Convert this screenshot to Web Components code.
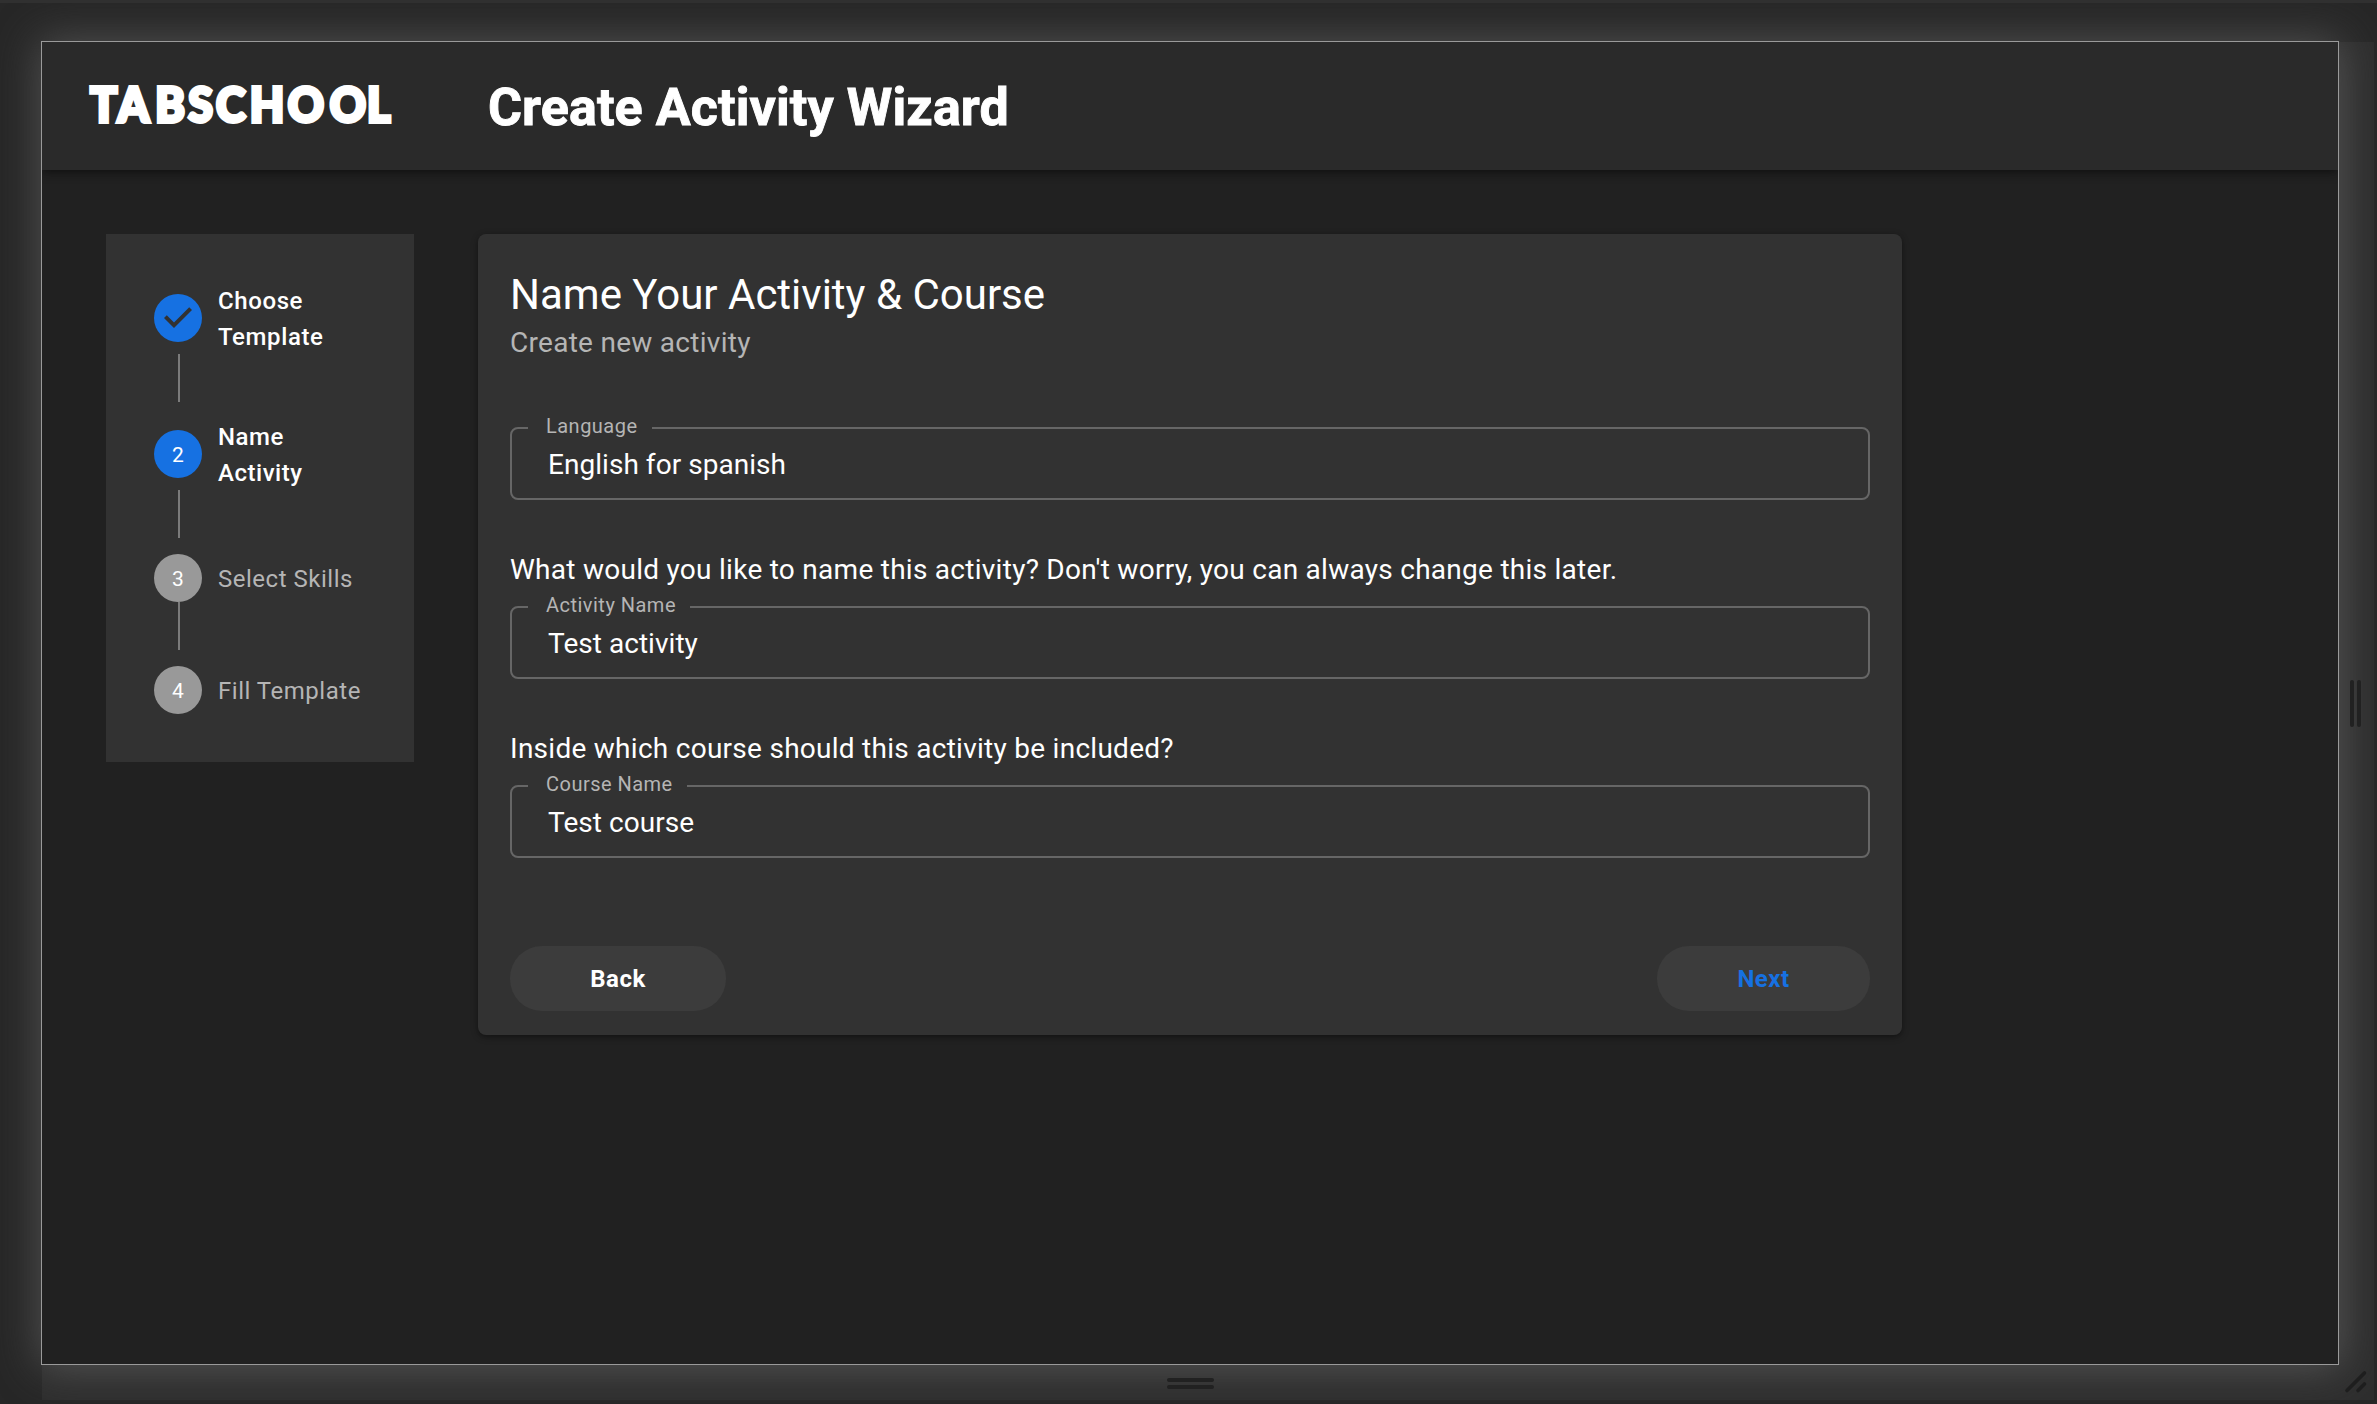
<!DOCTYPE html>
<html lang="en">
<head>
<meta charset="utf-8">
<title>Create Activity Wizard</title>
<style>
html,body{margin:0;height:100%;background:#272727;font-family:Roboto,sans-serif;color:#fff;overflow:hidden}
</style>
</head>
<body>
<device-frame>
  <app-header slot="screen">Create Activity Wizard</app-header>
  <wizard-layout slot="screen">
    <wizard-steps slot="side">
      <wizard-step state="done" n="1">Choose Template</wizard-step>
      <wizard-step state="active" n="2">Name Activity</wizard-step>
      <wizard-step n="3">Select Skills</wizard-step>
      <wizard-step n="4" last>Fill Template</wizard-step>
    </wizard-steps>
    <wizard-card>
      <span slot="title">Name Your Activity &amp; Course</span>
      <span slot="subtitle">Create new activity</span>
      <outlined-field label="Language" notch="124">English for spanish</outlined-field>
      <outlined-field label="Activity Name" notch="162" question="What would you like to name this activity? Don't worry, you can always change this later.">Test activity</outlined-field>
      <outlined-field label="Course Name" notch="159" question="Inside which course should this activity be included?">Test course</outlined-field>
      <pill-button slot="actions" style="width:216px">Back</pill-button>
      <pill-button slot="actions" primary style="width:213px">Next</pill-button>
    </wizard-card>
  </wizard-layout>
</device-frame>
<script>
const define=(name,html)=>customElements.define(name,class extends HTMLElement{
  constructor(){
    super();
    const t=document.createElement('template');
    t.innerHTML=typeof html==='function'?html(this):html;
    this.attachShadow({mode:'open'}).append(t.content.cloneNode(true));
  }
});

define('device-frame',`<style>
:host{display:grid;box-sizing:border-box;width:2377px;height:1404px;grid-template:38px 1324px 39px/41px 2298px 38px;border-top:3px solid #303030;background:#272727;overflow:hidden}
.screen{grid-area:2/2;box-sizing:border-box;border:1px solid #9a9a9a;background:#212121;box-shadow:0 0 40px 1px #525252;display:flex;flex-direction:column;overflow:hidden}
.grip{display:flex;justify-content:center;align-items:center;background:rgba(255,255,255,.035);z-index:1}
.right{box-sizing:border-box;grid-area:2/3;margin:1px 3px 0 0;padding-right:2px;gap:3px}
.right i{width:4px;height:47px}
.bottom{box-sizing:border-box;grid-area:3/2;margin:0 0 4px 1px;padding-top:2px;flex-direction:column;gap:3px}
.bottom i{width:47px;height:4px}
i{background:#212121;border-radius:2px}
.corner{grid-area:3/3;margin:0 3px 4px 0;background:rgba(255,255,255,.035);z-index:1}
svg{display:block}
</style>
<div class="screen"><slot name="screen"></slot></div>
<div class="grip right"><i></i><i></i></div>
<div class="grip bottom"><i></i><i></i></div>
<div class="corner"><svg width="35" height="35"><path d="M8 25.500 25.500 8M19 25.500l6.500-6.500" stroke="#1e1e1e" stroke-width="3.6" stroke-linecap="round"/></svg></div>`);

define('app-header',`<style>
:host{display:flex;align-items:center;height:128px;flex:none;background:#2a2a2a;box-shadow:0 2px 8px -1px rgba(0,0,0,.4),0 4px 10px rgba(0,0,0,.2);padding-left:44px;z-index:1}
svg{display:block;flex:none;width:402px;height:128px}
text{font:900 47px Lato,sans-serif;fill:#fff;stroke:#fff;stroke-width:3.8}
h1{margin:3px 0 0;font-weight:700;font-size:52px;line-height:64px;letter-spacing:.1px;-webkit-text-stroke:.9px #fff}
</style>
<svg><g transform="scale(.95 1)"><text y="80.4" x="4.5 33.3 72.8 107.7 136.8 172.5 212.4 256.6 295.7">TABSCHOOL</text></g></svg>
<h1><slot></slot></h1>`);

define('wizard-layout',`<style>
:host{display:flex;align-items:flex-start;gap:64px;padding:64px}
</style><slot name="side"></slot><slot></slot>`);

define('wizard-steps',`<style>
:host{display:block;box-sizing:border-box;width:308px;padding:48px;background:#323232}
</style><slot></slot>`);

define('wizard-step',el=>{
  const s=el.getAttribute('state'),n=el.getAttribute('n');
  return `<style>
:host{display:block;margin-bottom:${el.hasAttribute('last')?0:16}px}
.row{display:flex;align-items:center;gap:16px;height:${s?72:48}px}
.dot{flex:none;width:48px;height:48px;border-radius:50%;display:flex;align-items:center;justify-content:center;font-size:21px;line-height:24px;background:${s?'#1671e2':'#999'}}
.dot span{margin-top:1px}
.label{width:128px;padding-top:2px;font-size:24px;line-height:36px;letter-spacing:${s==='done'?.6:.52}px;white-space:${s?'normal':'nowrap'};font-weight:${s?500:400};color:${s?'#fff':'#b5b5b5'}}
.line{width:2px;height:48px;margin-left:24px;background:#7b7b7b}
</style>
<div class="row"><div class="dot">${s==='done'?'<svg width="48" height="48" viewBox="0 0 24 24"><path d="M10 17l-5-5 1.4-1.4 3.6 3.6 7.6-7.6L19 8l-9 9z" fill="#323232"/></svg>':`<span>${n}</span>`}</div><div class="label"><slot></slot></div></div>
${el.hasAttribute('last')?'':'<div class="line"></div>'}`});

define('wizard-card',`<style>
:host{display:block;box-sizing:border-box;width:1424px;height:801px;padding:34px 32px 24px;background:#323232;border-radius:8px;box-shadow:0 2px 4px rgba(0,0,0,.3),0 2px 8px rgba(0,0,0,.15)}
h2{margin:0;font-weight:400;font-size:42px;line-height:54px}
p{margin:0 0 56px;font-size:28px;line-height:36px;padding-top:3px;color:#b5b5b5;letter-spacing:.28px}
footer{display:flex;justify-content:space-between;margin-top:88px}
</style>
<h2><slot name="title"></slot></h2><p><slot name="subtitle"></slot></p>
<slot></slot>
<footer><slot name="actions"></slot></footer>`);

define('outlined-field',el=>{
  const q=el.getAttribute('question');
  return `<style>
:host{display:block}
.q{padding-top:52px;margin-bottom:8px;font-size:28px;line-height:36px;white-space:nowrap;letter-spacing:.27px}
fieldset{box-sizing:border-box;margin:0;height:83px;min-width:0;border:2px solid #666;border-radius:8px;padding:9px 16px 0}
legend{box-sizing:border-box;width:${el.getAttribute('notch')}px;height:22px;padding:0 0 0 18px;font-size:20px;line-height:19px;letter-spacing:.48px;color:#b5b5b5;white-space:nowrap}
.v{padding-left:20px;font-size:28px;line-height:34px;letter-spacing:.04px}
</style>${q?`<div class="q">${q}</div>`:''}
<fieldset><legend><span>${el.getAttribute('label')}</span></legend><div class="v"><slot></slot></div></fieldset>`});

define('pill-button',el=>`<style>
:host{display:flex;align-items:center;justify-content:center;height:65px;border-radius:32px;background:#3c3c3c;color:${el.hasAttribute('primary')?'#1671e2':'#fff'};font-weight:700;font-size:24px;line-height:30px;letter-spacing:.5px}
</style><span><slot></slot></span>`);
</script>
</body>
</html>
